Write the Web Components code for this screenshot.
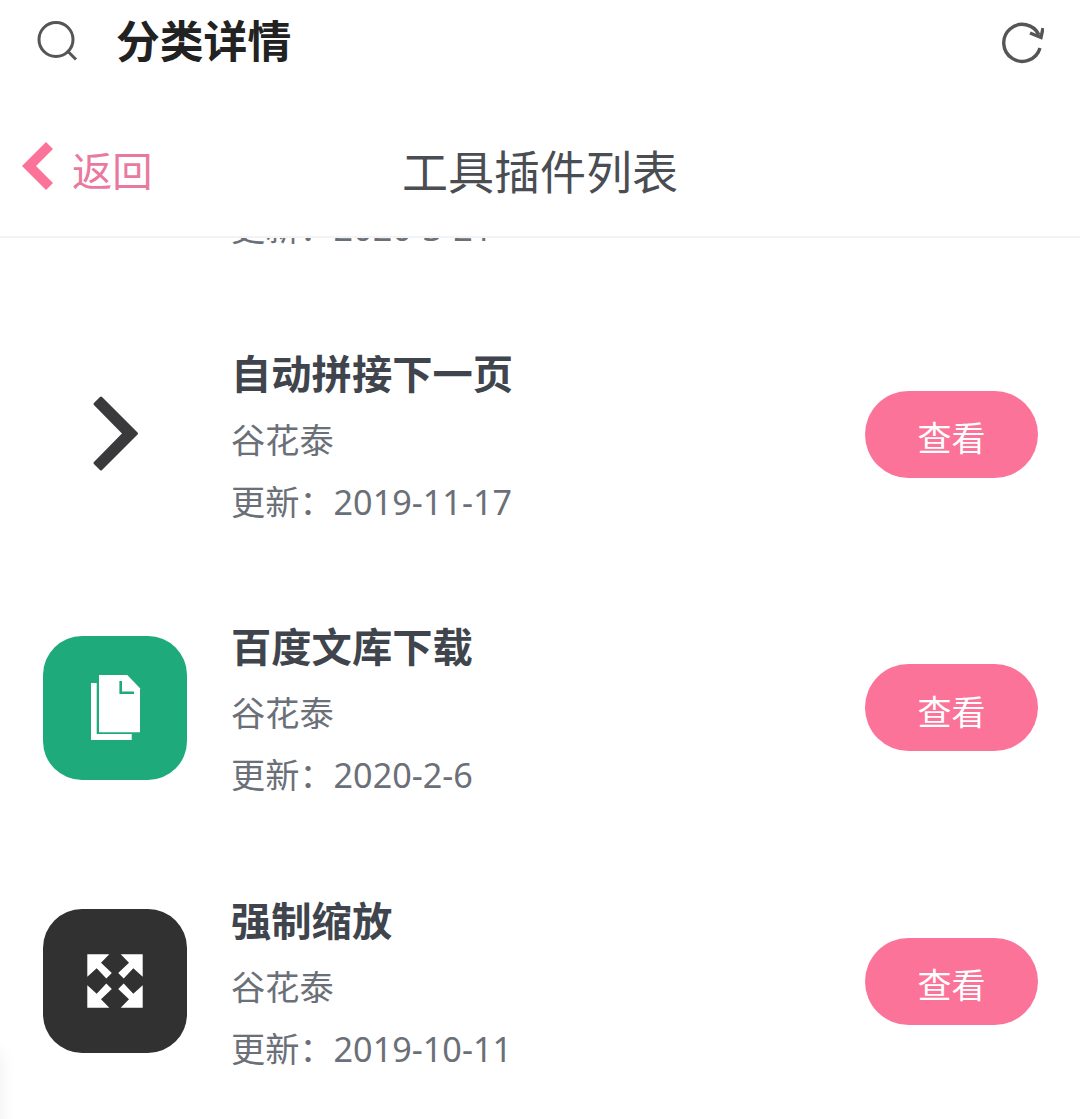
<!DOCTYPE html>
<html lang="zh">
<head>
<meta charset="utf-8">
<title>工具插件列表</title>
<style>
  html, body { margin: 0; padding: 0; background: #fff; }
  body { font-family: "Noto Sans", "Noto Sans CJK SC", sans-serif; width: 1080px; height: 1119px; overflow: hidden; }
</style>
</head>
<body>
<app-bar heading="分类详情"></app-bar>
<nav-header heading="工具插件列表" back="返回"></nav-header>
<plugin-list>
  <plugin-row name="" author="谷花泰" updated="更新：2020-3-21"></plugin-row>
  <plugin-row name="自动拼接下一页" author="谷花泰" updated="更新：2019-11-17">
    <svg slot="icon" width="144" height="144" viewBox="0 0 144 144">
      <path d="M58 36L93.500 71.500 58 107 52 101 81 71.500 52 42z" fill="#3a3a3c" stroke="#3a3a3c" stroke-width="3" stroke-linejoin="round"/>
    </svg>
  </plugin-row>
  <plugin-row name="百度文库下载" author="谷花泰" updated="更新：2020-2-6">
    <svg slot="icon" width="144" height="144" viewBox="0 0 144 144">
      <rect width="144" height="144" rx="39" fill="#1eaa7a"/>
      <path d="M48 47h5.700v51h35v6H48z" fill="#fff"/>
      <path d="M56 39h28.300L97 52.300V96.300H56z" fill="#fff"/>
      <path d="M77.700 45v11.700H91" fill="none" stroke="#1eaa7a" stroke-width="2.600"/>
    </svg>
  </plugin-row>
  <plugin-row name="强制缩放" author="谷花泰" updated="更新：2019-10-11">
    <svg slot="icon" width="144" height="144" viewBox="0 0 144 144">
      <rect width="144" height="144" rx="39" fill="#313131"/>
      <g fill="#fff">
        <path d="M44.300 45.300H66.300L58 53.700 68.800 64 63.300 69.500 53.700 59.300 44.300 67.700z"/>
        <path transform="matrix(-1 0 0 1 144 0)" d="M44.300 45.300H66.300L58 53.700 68.800 64 63.300 69.500 53.700 59.300 44.300 67.700z"/>
        <path transform="matrix(1 0 0 -1 0 144)" d="M44.300 45.300H66.300L58 53.700 68.800 64 63.300 69.500 53.700 59.300 44.300 67.700z"/>
        <path transform="matrix(-1 0 0 -1 144 144)" d="M44.300 45.300H66.300L58 53.700 68.800 64 63.300 69.500 53.700 59.300 44.300 67.700z"/>
      </g>
    </svg>
  </plugin-row>
</plugin-list>
<edge-shadow></edge-shadow>
<script>
class AppBar extends HTMLElement {
  constructor() {
    super();
    this.attachShadow({ mode: 'open' });
    this.shadowRoot.innerHTML = `
      <style>
        :host { display: flex; align-items: center; height: 87px; padding: 0 36px 4px 37px; box-sizing: border-box; color: #222; }
        h1 { flex: 1; margin: 0 0 0 37px; font-size: 43.800px; font-weight: 700; line-height: 83px; }
        svg { display: block; flex: none; }
      </style>
      <svg width="42" height="42" viewBox="0 0 42 42" fill="none" stroke="#555" stroke-width="3">
        <circle cx="19" cy="18.500" r="17"/>
        <path d="M30 29.500l9 9"/>
      </svg>
      <h1></h1>
      <svg width="44" height="44" viewBox="0 0 44 44" fill="none" stroke="#555" stroke-width="3.400">
        <path d="M39 15A18.500 18.500 0 1 0 40 28"/>
        <path d="M43 8L41 17.500 30 13"/>
      </svg>
    `;
    this.shadowRoot.querySelector('h1').textContent = this.getAttribute('heading') || '';
  }
}

class NavHeader extends HTMLElement {
  constructor() {
    super();
    this.attachShadow({ mode: 'open' });
    this.shadowRoot.innerHTML = `
      <style>
        :host { display: block; position: relative; z-index: 1; background: #fff; height: 149px; border-bottom: 2px solid #f3f3f3; }
        .bar { display: grid; grid-template-columns: 1fr auto 1fr; align-items: center; height: 149px; box-sizing: border-box; padding-top: 18px; }
        .back { display: flex; align-items: center; gap: 19px; padding-left: 22px; color: #e9799f; font-size: 40.300px; line-height: 56px; }
        .title { color: #4a4d52; font-size: 46px; line-height: 1; }
        svg { display: block; flex: none; margin-bottom: 10px; }
      </style>
      <div class="bar">
        <div class="back">
          <svg width="31" height="48" viewBox="0 0 31 48"><path d="M24 0l7 7-17 17 17 17-7 7L0 24z" fill="#fc7399"/></svg>
          <span class="label"></span>
        </div>
        <div class="title"></div>
        <div></div>
      </div>
    `;
    this.shadowRoot.querySelector('.label').textContent = this.getAttribute('back') || '';
    this.shadowRoot.querySelector('.title').textContent = this.getAttribute('heading') || '';
  }
}

class PluginList extends HTMLElement {
  constructor() {
    super();
    this.attachShadow({ mode: 'open' });
    this.shadowRoot.innerHTML = `
      <style>
        :host { display: block; height: 881px; overflow: hidden; }
        .scroll { margin-top: -214.200px; }
      </style>
      <div class="scroll"><slot></slot></div>
    `;
  }
}

class PluginRow extends HTMLElement {
  constructor() {
    super();
    this.attachShadow({ mode: 'open' });
    this.shadowRoot.innerHTML = `
      <style>
        :host { display: flex; align-items: center; height: 273.500px; padding: 0 42px 0 43px; box-sizing: border-box; }
        .icon { flex: none; width: 144px; height: 144px; margin-right: 44px; }
        .text { flex: 1; min-width: 0; margin-top: 7px; color: #6b7078; font-size: 34.200px; line-height: 62px; }
        .name { color: #40454d; font-size: 40.300px; font-weight: 700; line-height: 62px; height: 62px; margin-bottom: 4px; }
        button { flex: none; width: 173px; height: 87px; border: 0; border-radius: 44px; background: #fc7399; color: #fff; font: inherit; font-size: 34px; padding: 5px 0 0; }
        ::slotted(svg) { display: block; }
      </style>
      <div class="icon"><slot name="icon"></slot></div>
      <div class="text">
        <div class="name"></div>
        <div class="author"></div>
        <div class="updated"></div>
      </div>
      <button type="button">查看</button>
    `;
    this.shadowRoot.querySelector('.name').textContent = this.getAttribute('name') || '';
    this.shadowRoot.querySelector('.author').textContent = this.getAttribute('author') || '';
    this.shadowRoot.querySelector('.updated').textContent = this.getAttribute('updated') || '';
  }
}

// faint shadow of something floating just off the left edge
class EdgeShadow extends HTMLElement {
  constructor() {
    super();
    this.attachShadow({ mode: 'open' });
    this.shadowRoot.innerHTML = `
      <style>
        :host { display: block; position: fixed; left: -20px; top: 1050px; width: 20px; height: 120px; border-radius: 10px; box-shadow: 0 0 18px rgba(0, 0, 0, .07); }
      </style>
    `;
  }
}

customElements.define('app-bar', AppBar);
customElements.define('nav-header', NavHeader);
customElements.define('plugin-list', PluginList);
customElements.define('plugin-row', PluginRow);
customElements.define('edge-shadow', EdgeShadow);
</script>
</body>
</html>
